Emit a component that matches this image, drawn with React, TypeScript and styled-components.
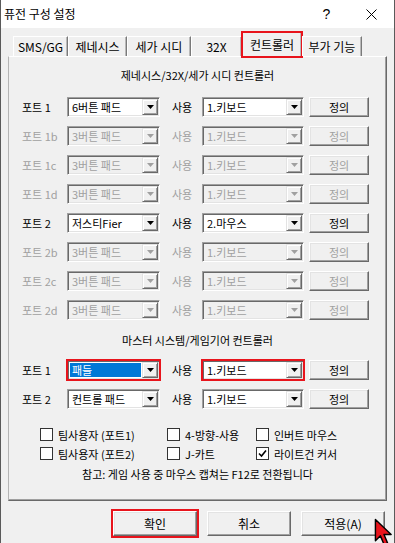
import React from "react";
import styled, { createGlobalStyle, css } from "styled-components";

const RED = "#e8141c";

const Global = createGlobalStyle`
  html, body { margin: 0; padding: 0; background: #f0f0f0; }
  body {
    font-family: "Noto Sans CJK KR", "Noto Sans", sans-serif;
    font-size: 11px;
    color: #000;
  }
  #root { width: 395px; height: 543px; }
`;

const Win = styled.div`
  position: relative;
  width: 395px;
  height: 543px;
  box-sizing: border-box;
  background: #f0f0f0;
  border-left: 1px solid #5a5a5a;
  border-right: 1px solid #5a5a5a;
  display: flex;
  flex-direction: column;
  overflow: hidden;
`;

const TitleBar = styled.div`
  height: 28px;
  flex: none;
  background: #fff;
  display: flex;
  align-items: center;
  padding-left: 3px;
`;

const Title = styled.div`
  flex: 1;
  font-size: 12px;
  line-height: 16px;
`;

const TitleBtn = styled.div`
  width: 45px;
  height: 28px;
  display: flex;
  align-items: center;
  justify-content: center;
  font-family: "Liberation Sans", sans-serif;
  font-size: 14px;
`;

const Body = styled.div`
  flex: 1;
  display: flex;
  flex-direction: column;
  padding: 0 7px;
`;

const TabStrip = styled.div`
  height: 28px;
  flex: none;
  display: flex;
  align-items: flex-end;
  padding-left: 5px;
  position: relative;
  z-index: 1;
`;

const Tab = styled.div<{ $w: number; $active?: boolean }>`
  width: ${(p) => p.$w}px;
  box-sizing: border-box;
  height: 20px;
  display: flex;
  align-items: center;
  justify-content: center;
  font-size: 12px;
  line-height: 14px;
  background: #f0f0f0;
  border-top: 1px solid #fff;
  border-left: 1px solid #fff;
  border-right: 1px solid #7a7a7a;
  box-shadow: inset -1px 0 #b9b9b9;
  ${(p) =>
    p.$active &&
    css`
      height: 25px;
      margin-bottom: -1px;
      border-right: 1px solid #7a7a7a;
      outline: 2px solid ${RED};
      outline-offset: -1px;
      padding-bottom: 1px;
    `}
`;

const Panel = styled.div`
  height: 445px;
  flex: none;
  box-sizing: border-box;
  border-top: 1px solid #fff;
  border-left: 1px solid #b4b4b4;
  border-right: 1px solid #696969;
  border-bottom: 1px solid #696969;
  box-shadow: inset -1px -1px #a0a0a0;
  padding: 10px 0 0 13px;
  display: flex;
  flex-direction: column;
`;

const GroupTitle = styled.div<{ $top: number }>`
  margin-top: ${(p) => p.$top}px;
  height: 16px;
  line-height: 16px;
  text-align: center;
  padding-right: 13px;
`;

const Rows = styled.div<{ $top: number }>`
  margin-top: ${(p) => p.$top}px;
  display: flex;
  flex-direction: column;
`;

const PortRow = styled.div`
  height: 29px;
  display: grid;
  grid-template-columns: 45px 93px 42px 102px 65px;
  align-items: center;
`;

const Label = styled.div<{ $disabled?: boolean }>`
  color: ${(p) => (p.$disabled ? "#a0a0a0" : "#000")};
  line-height: 14px;
  white-space: nowrap;
`;

const UseLabel = styled(Label)`
  padding-left: 12px;
`;

const Combo = styled.div<{ $disabled?: boolean; $flag?: boolean }>`
  height: 20px;
  box-sizing: border-box;
  display: flex;
  align-items: stretch;
  background: ${(p) => (p.$disabled ? "#f0f0f0" : "#fff")};
  border: 1px solid;
  border-color: #a0a0a0 #fff #fff #a0a0a0;
  box-shadow: inset 1px 1px #696969, inset -1px -1px #e3e3e3;
  padding: 1px;
  ${(p) =>
    p.$flag &&
    css`
      outline: 2px solid ${RED};
      outline-offset: -1px;
    `}
`;

const ComboText = styled.div<{ $disabled?: boolean; $selected?: boolean }>`
  flex: 1;
  display: flex;
  align-items: center;
  padding-left: 2px;
  margin: 1px 1px 1px 1px;
  white-space: nowrap;
  overflow: hidden;
  color: ${(p) => (p.$disabled ? "#a0a0a0" : "#000")};
  ${(p) =>
    p.$selected &&
    css`
      background: #0078d7;
      color: #fff;
    `}
`;

const ArrowBtn = styled.div<{ $disabled?: boolean }>`
  width: 16px;
  flex: none;
  box-sizing: border-box;
  background: #f0f0f0;
  border: 1px solid;
  border-color: #e3e3e3 #696969 #696969 #e3e3e3;
  box-shadow: inset 1px 1px #fff, inset -1px -1px #a0a0a0;
  display: flex;
  align-items: center;
  justify-content: center;
  svg { fill: ${(p) => (p.$disabled ? "#a0a0a0" : "#000")}; }
`;

const raised = css`
  box-sizing: border-box;
  background: #f0f0f0;
  border: 1px solid;
  border-color: #fff #696969 #696969 #fff;
  box-shadow: inset -1px -1px #a0a0a0, inset 1px 1px #e3e3e3;
  display: flex;
  align-items: center;
  justify-content: center;
`;

const DefButton = styled.div<{ $disabled?: boolean }>`
  ${raised};
  justify-self: end;
  width: 60px;
  height: 20px;
  color: ${(p) => (p.$disabled ? "#a0a0a0" : "#000")};
`;

const CheckGrid = styled.div`
  margin-top: 12px;
  padding-left: 18px;
  display: grid;
  grid-template-columns: 127px 89px 1fr;
`;

const CheckItem = styled.div`
  height: 19px;
  display: flex;
  align-items: center;
  gap: 5px;
  white-space: nowrap;
`;

const Box = styled.span`
  width: 13px;
  height: 13px;
  box-sizing: border-box;
  border: 1px solid #333;
  background: #fff;
  display: flex;
  align-items: center;
  justify-content: center;
`;

const Note = styled.div`
  margin-top: 3px;
  height: 16px;
  line-height: 16px;
  text-align: center;
  padding-right: 13px;
`;

const Footer = styled.div`
  margin-top: 10px;
  display: flex;
  justify-content: flex-end;
  gap: 10px;
  padding-right: 2px;
`;

const FootButton = styled.div<{ $flag?: boolean }>`
  ${raised};
  width: 84px;
  height: 25px;
  font-size: 12px;
  ${(p) =>
    p.$flag &&
    css`
      outline: 2px solid ${RED};
      outline-offset: 0px;
    `}
`;

const Cursor = styled.svg`
  position: absolute;
  left: 373px;
  top: 518px;
`;

type Row = {
  label: string;
  dev: string;
  use: string;
  disabled?: boolean;
  selected?: boolean;
  flagDev?: boolean;
  flagUse?: boolean;
};

const genRows: Row[] = [
  { label: "포트 1", dev: "6버튼 패드", use: "1.키보드" },
  { label: "포트 1b", dev: "3버튼 패드", use: "1.키보드", disabled: true },
  { label: "포트 1c", dev: "3버튼 패드", use: "1.키보드", disabled: true },
  { label: "포트 1d", dev: "3버튼 패드", use: "1.키보드", disabled: true },
  { label: "포트 2", dev: "저스티Fier", use: "2.마우스" },
  { label: "포트 2b", dev: "3버튼 패드", use: "1.키보드", disabled: true },
  { label: "포트 2c", dev: "3버튼 패드", use: "1.키보드", disabled: true },
  { label: "포트 2d", dev: "3버튼 패드", use: "1.키보드", disabled: true },
];

const msRows: Row[] = [
  { label: "포트 1", dev: "패들", use: "1.키보드", selected: true, flagDev: true, flagUse: true },
  { label: "포트 2", dev: "컨트롤 패드", use: "1.키보드" },
];

const checks = [
  { text: "팀사용자 (포트1)" },
  { text: "4-방향-사용" },
  { text: "인버트 마우스" },
  { text: "팀사용자 (포트2)" },
  { text: "J-카트" },
  { text: "라이트건 커서", checked: true },
];

const tabs = [
  { t: "SMS/GG", w: 55 },
  { t: "제네시스", w: 59 },
  { t: "세가 시디", w: 64 },
  { t: "32X", w: 51 },
  { t: "컨트롤러", w: 60, active: true },
  { t: "부가 기능", w: 60 },
];

const Arrow = () => (
  <svg width="7" height="4" viewBox="0 0 7 4">
    <polygon points="0,0 7,0 3.5,4" />
  </svg>
);

const ComboBox: React.FC<{ text: string; disabled?: boolean; selected?: boolean; flag?: boolean }> = ({
  text,
  disabled,
  selected,
  flag,
}) => (
  <Combo $disabled={disabled} $flag={flag}>
    <ComboText $disabled={disabled} $selected={selected}>{text}</ComboText>
    <ArrowBtn $disabled={disabled}>
      <Arrow />
    </ArrowBtn>
  </Combo>
);

const PortLine: React.FC<{ r: Row }> = ({ r }) => (
  <PortRow>
    <Label $disabled={r.disabled}>{r.label}</Label>
    <ComboBox text={r.dev} disabled={r.disabled} selected={r.selected} flag={r.flagDev} />
    <UseLabel $disabled={r.disabled}>사용</UseLabel>
    <ComboBox text={r.use} disabled={r.disabled} flag={r.flagUse} />
    <DefButton $disabled={r.disabled}>정의</DefButton>
  </PortRow>
);

export default function App() {
  return (
    <>
      <Global />
      <Win>
        <TitleBar>
          <Title>퓨전 구성 설정</Title>
          <TitleBtn>?</TitleBtn>
          <TitleBtn>
            <svg width="11" height="11" viewBox="0 0 11 11">
              <path d="M0.5 0.5 L10.5 10.5 M10.5 0.5 L0.5 10.5" stroke="#000" strokeWidth="1" />
            </svg>
          </TitleBtn>
        </TitleBar>
        <Body>
          <TabStrip>
            {tabs.map((t) => (
              <Tab key={t.t} $w={t.w} $active={t.active}>
                {t.t}
              </Tab>
            ))}
          </TabStrip>
          <Panel>
            <GroupTitle $top={0}>제네시스/32X/세가 시디 컨트롤러</GroupTitle>
            <Rows $top={9}>
              {genRows.map((r) => (
                <PortLine key={r.label} r={r} />
              ))}
            </Rows>
            <GroupTitle $top={8}>마스터 시스템/게임기어 컨트롤러</GroupTitle>
            <Rows $top={7}>
              {msRows.map((r) => (
                <PortLine key={r.label} r={r} />
              ))}
            </Rows>
            <CheckGrid>
              {checks.map((c) => (
                <CheckItem key={c.text}>
                  <Box>
                    {c.checked && (
                      <svg width="9" height="9" viewBox="0 0 9 9">
                        <path d="M1 4.5 L3.5 7 L8 1.5" stroke="#000" strokeWidth="1.6" fill="none" />
                      </svg>
                    )}
                  </Box>
                  {c.text}
                </CheckItem>
              ))}
            </CheckGrid>
            <Note>참고: 게임 사용 중 마우스 캡쳐는 F12로 전환됩니다</Note>
          </Panel>
          <Footer>
            <FootButton $flag>확인</FootButton>
            <FootButton>취소</FootButton>
            <FootButton>적용(A)</FootButton>
          </Footer>
        </Body>
        <Cursor width="20" height="30" viewBox="0 0 14 21">
          <path
            d="M1 1 L1 16 L4.5 12.5 L7 18.5 L9.5 17.5 L7 11.5 L12 11.5 Z"
            fill="#e8141c"
            stroke="#000"
            strokeWidth="1"
            strokeLinejoin="round"
          />
        </Cursor>
      </Win>
    </>
  );
}
